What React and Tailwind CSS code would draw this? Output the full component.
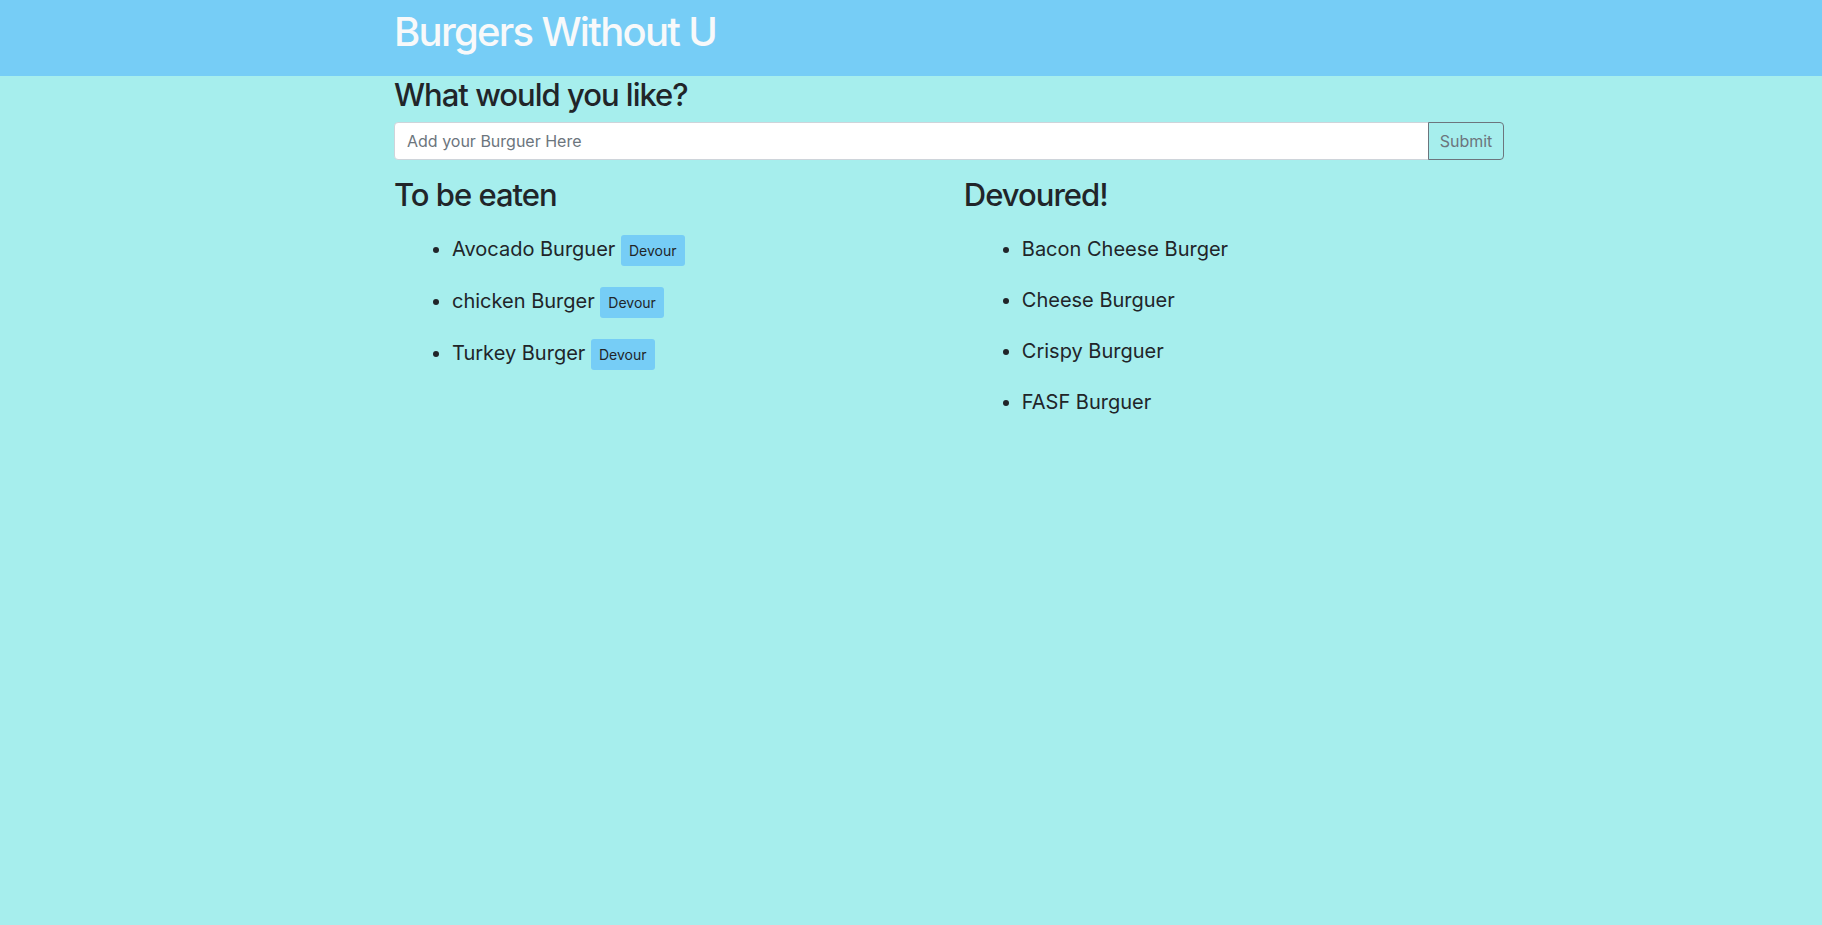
import React, { useState } from 'react';

const toEat = ['Avocado Burguer', 'chicken Burger', 'Turkey Burger'];
const devoured = ['Bacon Cheese Burger', 'Cheese Burguer', 'Crispy Burguer', 'FASF Burguer'];

export default function App() {
  const [value, setValue] = useState('');

  return (
    <div className="min-h-[925px] bg-[#a6eeed] text-[#212529] font-['Inter','Noto_Sans',sans-serif]">
      {/* Header */}
      <div className="h-[76px] bg-[#76cdf6]">
        <div className="w-[1140px] ml-[379px] px-[15px] pt-[8px]">
          <h1 className="text-[40px] leading-[48px] font-medium text-[#f8f9fa] tracking-[-1.7px]">
            Burgers Without U
          </h1>
        </div>
      </div>

      <div className="w-[1140px] ml-[379px] px-[15px]">
        <h2 className="text-[31px] leading-[38px] font-medium mb-[8px] tracking-[-1px]">What would you like?</h2>
        <form className="flex mb-[16px]" onSubmit={(e) => e.preventDefault()}>
          <input
            value={value}
            onChange={(e) => setValue(e.target.value)}
            placeholder="Add your Burguer Here"
            className="flex-1 h-[38px] bg-white border border-[#ced4da] rounded-l-[4px] px-[12px] text-[16px] placeholder:text-[#6c757d] outline-none"
          />
          <button
            type="submit"
            className="h-[38px] w-[76px] border border-[#6c757d] rounded-r-[4px] text-[16px] text-[#6c757d] -ml-px"
          >
            Submit
          </button>
        </form>

        <div className="flex">
          <div className="w-[570px] pr-[15px]">
            <h2 className="text-[31px] leading-[38px] font-medium mb-[8px] tracking-[-1px]">To be eaten</h2>
            <ul className="list-disc pl-[58px] pt-[2px]">
              {toEat.map((b) => (
                <li key={b} className="text-[20px] leading-[31px] py-[10px]">
                  {b}{' '}
                  <button className="inline-block align-middle bg-[#76cdf6] rounded-[3px] px-[8px] h-[31px] text-[14px] leading-[21px] text-[#212529]">
                    Devour
                  </button>
                </li>
              ))}
            </ul>
          </div>
          <div className="w-[570px] px-[15px]">
            <h2 className="text-[31px] leading-[38px] font-medium mb-[8px] tracking-[-1px]">Devoured!</h2>
            <ul className="list-disc pl-[58px] pt-[2px]">
              {devoured.map((b) => (
                <li key={b} className="text-[20px] leading-[31px] py-[10px]">
                  {b}
                </li>
              ))}
            </ul>
          </div>
        </div>
      </div>
    </div>
  );
}
